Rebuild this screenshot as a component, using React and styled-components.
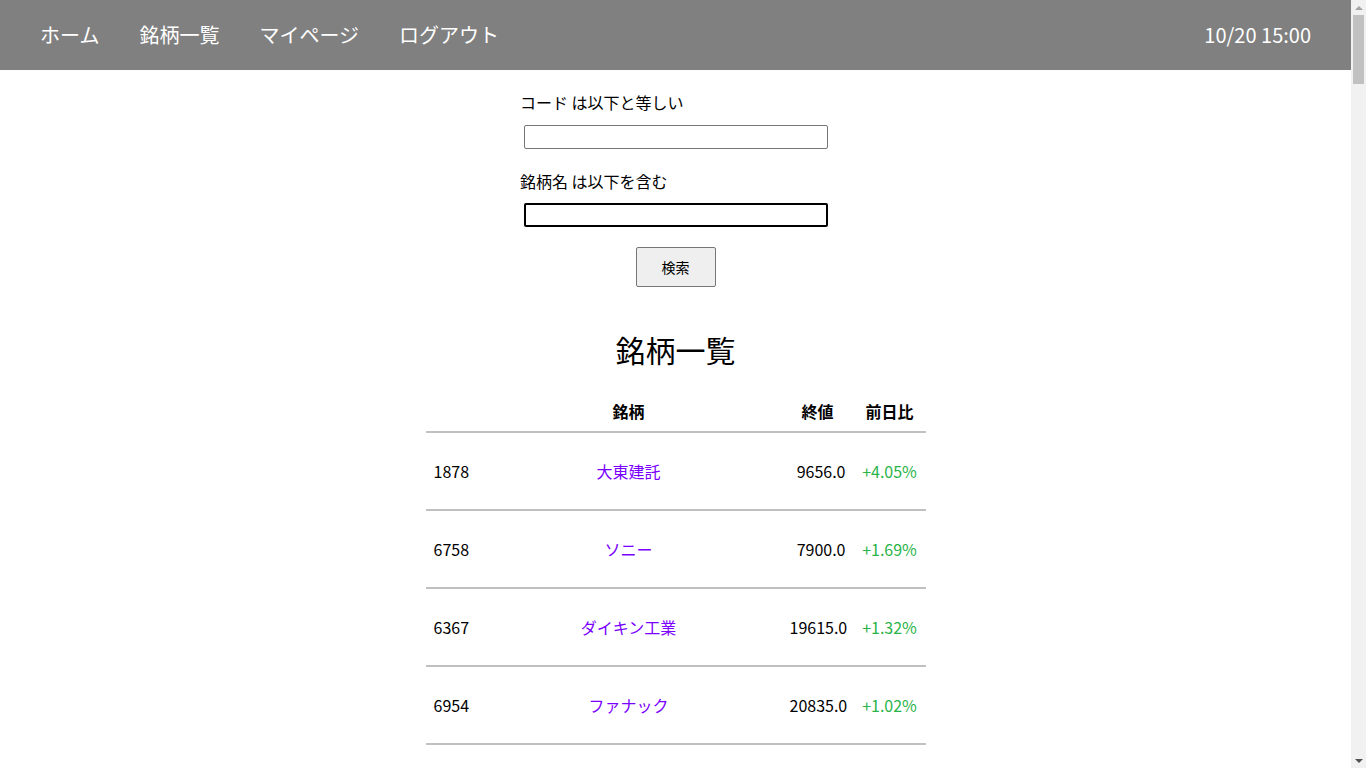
import React from "react"
import styled, { createGlobalStyle } from "styled-components"

const GlobalStyle = createGlobalStyle`
  html, body {
    margin: 0;
    padding: 0;
    background: #fff;
    font-family: "Noto Sans CJK JP", "Noto Sans", sans-serif;
    color: #000;
  }
  body {
    padding-right: 15px;
  }
`

const stocks = [
  { code: "1878", name: "大東建託", price: "9656.0", change: "+4.05%" },
  { code: "6758", name: "ソニー", price: "7900.0", change: "+1.69%" },
  { code: "6367", name: "ダイキン工業", price: "19615.0", change: "+1.32%" },
  { code: "6954", name: "ファナック", price: "20835.0", change: "+1.02%" },
]

const App = () => (
  <>
    <GlobalStyle />
    <NavBar>
      <NavLinks>
        <NavLink>ホーム</NavLink>
        <NavLink>銘柄一覧</NavLink>
        <NavLink>マイページ</NavLink>
        <NavLink>ログアウト</NavLink>
      </NavLinks>
      <Clock>10/20 15:00</Clock>
    </NavBar>

    <Main>
      <SearchForm onSubmit={e => e.preventDefault()}>
        <Label>コード は以下と等しい</Label>
        <Input type="text" />
        <Label>銘柄名 は以下を含む</Label>
        <Input type="text" focused autoFocus />
        <ButtonRow>
          <SearchButton type="submit">検索</SearchButton>
        </ButtonRow>
      </SearchForm>

      <Title>銘柄一覧</Title>

      <Table>
        <HeadRow>
          <Cell></Cell>
          <Cell align="center">銘柄</Cell>
          <Cell align="center">終値</Cell>
          <Cell align="center">前日比</Cell>
        </HeadRow>
        {stocks.map(s => (
          <Row key={s.code}>
            <Cell>{s.code}</Cell>
            <Cell align="center"><StockLink>{s.name}</StockLink></Cell>
            <Cell align="right">{s.price}</Cell>
            <Cell align="center"><Change>{s.change}</Change></Cell>
          </Row>
        ))}
      </Table>
    </Main>

    <ScrollTrack>
      <Arrow up />
      <Thumb />
      <Arrow />
    </ScrollTrack>
  </>
)

export default App

const NavBar = styled.header`
  height: 70px;
  background: #808080;
  display: flex;
  align-items: center;
  justify-content: space-between;
  padding: 0 40px 0 20px;
  color: #fff;
  font-size: 20px;
`

const NavLinks = styled.nav`
  display: flex;
`

const NavLink = styled.a`
  padding: 0 20px;
  color: #fff;
  text-decoration: none;
  line-height: 30px;
`

const Clock = styled.div`
  line-height: 30px;
`

const Main = styled.main`
  display: flex;
  flex-direction: column;
  align-items: center;
  padding-bottom: 80px;
`

const SearchForm = styled.form`
  width: 311px;
  margin-top: 20px;
  display: flex;
  flex-direction: column;
  align-items: flex-start;
`

const Label = styled.label`
  font-size: 16px;
  line-height: 24px;
  margin-bottom: 10px;
`

const Input = styled.input`
  box-sizing: border-box;
  width: 304px;
  height: 24px;
  margin: 1px 0 20px 4px;
  padding: 1px 2px;
  border: ${p => (p.focused ? "2px solid #000" : "1px solid #767676")};
  border-radius: 2px;
  background: #fff;
  outline: none;
  caret-color: #000;
  &:last-of-type {
    margin: 0 0 20px 4px;
  }
`

const ButtonRow = styled.div`
  align-self: stretch;
  display: flex;
  justify-content: center;
`

const SearchButton = styled.button`
  width: 80px;
  height: 40px;
  background: #efefef;
  border: 1px solid #767676;
  border-radius: 2px;
  font-family: "Noto Sans CJK JP", sans-serif;
  font-size: 14px;
  color: #000;
`

const Title = styled.h2`
  margin: 40px 0 19px;
  font-size: 30px;
  font-weight: 400;
  line-height: 45px;
`

const Table = styled.div`
  width: 500px;
  font-size: 16px;
`

const HeadRow = styled.div`
  display: grid;
  grid-template-columns: 50px 306px 72px 72px;
  align-items: center;
  height: 40px;
  font-weight: 700;
  border-bottom: 2px solid #c0c0c0;
`

const Row = styled(HeadRow)`
  height: 76px;
  font-weight: 400;
`

const Cell = styled.div`
  padding: 0 8px;
  text-align: ${p => p.align || "left"};
  white-space: nowrap;
  line-height: 24px;
`

const StockLink = styled.a`
  color: #7a00ff;
  text-decoration: none;
  cursor: pointer;
`

const Change = styled.span`
  color: #2ab44a;
`

/* stand-in for the browser's vertical scrollbar */
const ScrollTrack = styled.div`
  position: fixed;
  top: 0;
  right: 0;
  width: 15px;
  height: 100vh;
  background: #f1f1f1;
  display: flex;
  flex-direction: column;
  align-items: center;
`

const Arrow = styled.div`
  flex: none;
  height: 15px;
  width: 15px;
  display: flex;
  align-items: center;
  justify-content: center;
  margin-top: ${p => (p.up ? 0 : "auto")};
  &::before {
    content: "";
    border-left: 4px solid transparent;
    border-right: 4px solid transparent;
    ${p =>
      p.up
        ? "border-bottom: 4px solid #a3a3a3;"
        : "border-top: 4px solid #505050;"}
  }
`

const Thumb = styled.div`
  flex: none;
  width: 11px;
  height: 69px;
  background: #c1c1c1;
`
